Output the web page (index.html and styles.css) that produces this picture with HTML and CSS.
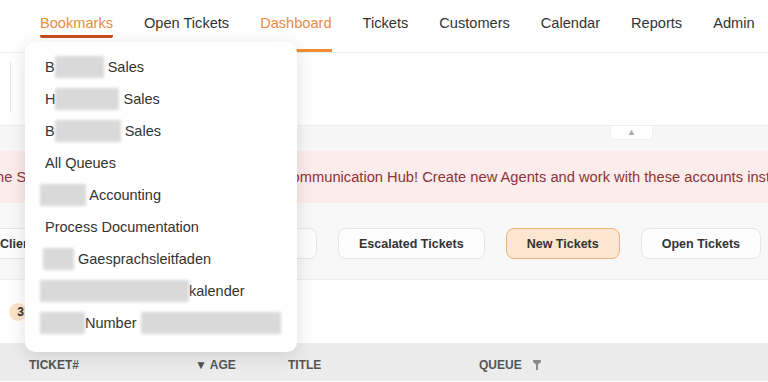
FILE: index.html
```html
<!DOCTYPE html>
<html lang="en">
<head>
  <meta charset="UTF-8" />
  <meta name="viewport" content="width=device-width, initial-scale=1.0"/>
  <title>Dashboard</title>
  <link rel="stylesheet" href="styles.css">
</head>
<body>
  <nav class="topnav">
    <div class="nav-item"><span class="nav-open">Bookmarks</span></div>
    <div class="nav-item">Open Tickets</div>
    <div class="nav-item current">Dashboard</div>
    <div class="nav-item">Tickets</div>
    <div class="nav-item">Customers</div>
    <div class="nav-item">Calendar</div>
    <div class="nav-item">Reports</div>
    <div class="nav-item">Admin</div>
  </nav>

  <div class="toolbar">
    <div class="divider"></div>
  </div>

  <div class="band">
    <div class="collapse-tab">&#9650;</div>
  </div>

  <div class="alert">
    <p class="alert-text">Please do not use the System Administrator account within the Communication Hub! Create new Agents and work with these accounts instead.</p>
  </div>

  <div class="filters">
    <button class="chip chip-first">Clients Waiting</button>
    <button class="chip">Escalated Tickets</button>
    <button class="chip chip-active">New Tickets</button>
    <button class="chip">Open Tickets</button>
  </div>

  <div class="counter">
    <span class="badge">3</span>
  </div>

  <div class="table-head">
    <div class="th">TICKET#</div>
    <div class="th">&#9660; AGE</div>
    <div class="th">TITLE</div>
    <div class="th">QUEUE
      <svg class="funnel" width="8" height="10" viewBox="0 0 8 10"><path d="M0 0H8V2L5 4.5V10H3V4.5L0 2Z" fill="#8a8a8a"/></svg>
    </div>
  </div>

  <!-- bookmarks dropdown, opened -->
  <div class="dropdown">
    <div class="dd-item">B<span class="redact" style="width:49px"></span> Sales</div>
    <div class="dd-item">H<span class="redact" style="width:64px"></span> Sales</div>
    <div class="dd-item">B<span class="redact" style="width:66px"></span> Sales</div>
    <div class="dd-item">All Queues</div>
    <div class="dd-item pull"><span class="redact" style="width:46px"></span> Accounting</div>
    <div class="dd-item">Process Documentation</div>
    <div class="dd-item pull-s"><span class="redact" style="width:31px"></span> Gaesprachsleitfaden</div>
    <div class="dd-item pull"><span class="redact" style="width:149px"></span>kalender</div>
    <div class="dd-item pull"><span class="redact" style="width:45px"></span>Number <span class="redact" style="width:140px"></span></div>
  </div>
</body>
</html>
```

FILE: styles.css
```css
body { margin: 0; font-family: "Liberation Sans", Arial, sans-serif; color: #333; background: #fff; overflow: hidden; position: relative; width: 768px; height: 382px; }

.topnav { display: flex; gap: 31px; padding-left: 40px; height: 52px; border-bottom: 1px solid #efefef; font-size: 14.6px; }
.nav-item { padding-top: 14px; line-height: 18px; white-space: nowrap; box-sizing: border-box; height: 52px; }
.nav-open { display: inline-block; color: #e98d3f; padding-bottom: 3px; border-bottom: 3px solid #c84e1c; border-radius: 2px; }
.nav-item.current { color: #e98d3f; box-shadow: inset 0 -3px 0 #ef8e2e; }

.toolbar { height: 73px; padding: 9px 10px 0; box-sizing: border-box; border-bottom: 1px solid #ececec; }
.divider { width: 1px; height: 50px; background: #e6e6e6; }

.band { height: 25px; background: #f7f7f7; }
.collapse-tab { margin-left: 610px; width: 43px; height: 14px; box-sizing: border-box; background: #fff; border: 1px solid #eee; border-top: none; border-radius: 0 0 5px 5px; color: #a8a8a8; font-size: 9px; line-height: 12px; text-align: center; }

.alert { height: 52px; background: #fcecec; overflow: hidden; }
.alert-text { margin: 0 0 0 -129.7px; white-space: nowrap; line-height: 52px; font-size: 14.7px; color: #8e3337; }

.filters { height: 77px; box-sizing: border-box; padding: 25px 7px 0 0; background: #f8f8f8; border-bottom: 1px solid #ececec; display: flex; justify-content: flex-end; align-items: flex-start; gap: 21px; overflow: hidden; }
.chip { flex-shrink: 0; height: 31px; padding: 0 20px; background: #fdfdfd; border: 1px solid #e6e6e6; border-radius: 8px; font-family: inherit; font-size: 12.5px; font-weight: bold; color: #333; white-space: nowrap; }
.chip-first { width: 338px; text-align: left; }
.chip-active { background: #fde6cf; border-color: #efb37c; }

.counter { height: 63px; display: flex; align-items: center; padding-left: 9px; }
.badge { display: inline-block; width: 18px; height: 18px; border-radius: 9px; background: #fde3c8; font-size: 12px; font-weight: bold; line-height: 18px; text-align: right; padding-right: 3px; box-sizing: border-box; }

.table-head { height: 38px; box-sizing: border-box; padding-top: 6px; background: #ececec; display: grid; grid-template-columns: 166px 93px 191px 1fr; padding-left: 29px; align-items: center; font-size: 12px; font-weight: bold; color: #555; }
.th { white-space: nowrap; }
.funnel { margin-left: 8px; vertical-align: -1px; }

.dropdown { position: absolute; left: 25px; top: 42px; width: 272px; height: 310px; box-sizing: border-box; padding: 9px 0 0 20px; background: #fff; border-radius: 10px; box-shadow: 0 4px 18px rgba(0,0,0,0.13); font-size: 14.5px; color: #333; }
.dd-item { height: 32px; line-height: 32px; white-space: nowrap; }
.dd-item.pull { margin-left: -5px; }
.dd-item.pull-s { margin-left: -2px; }
.redact { display: inline-block; vertical-align: middle; margin-top: -3px; height: 22px; background: #d3d3d3; filter: blur(1.5px); opacity: 0.85; }
```
